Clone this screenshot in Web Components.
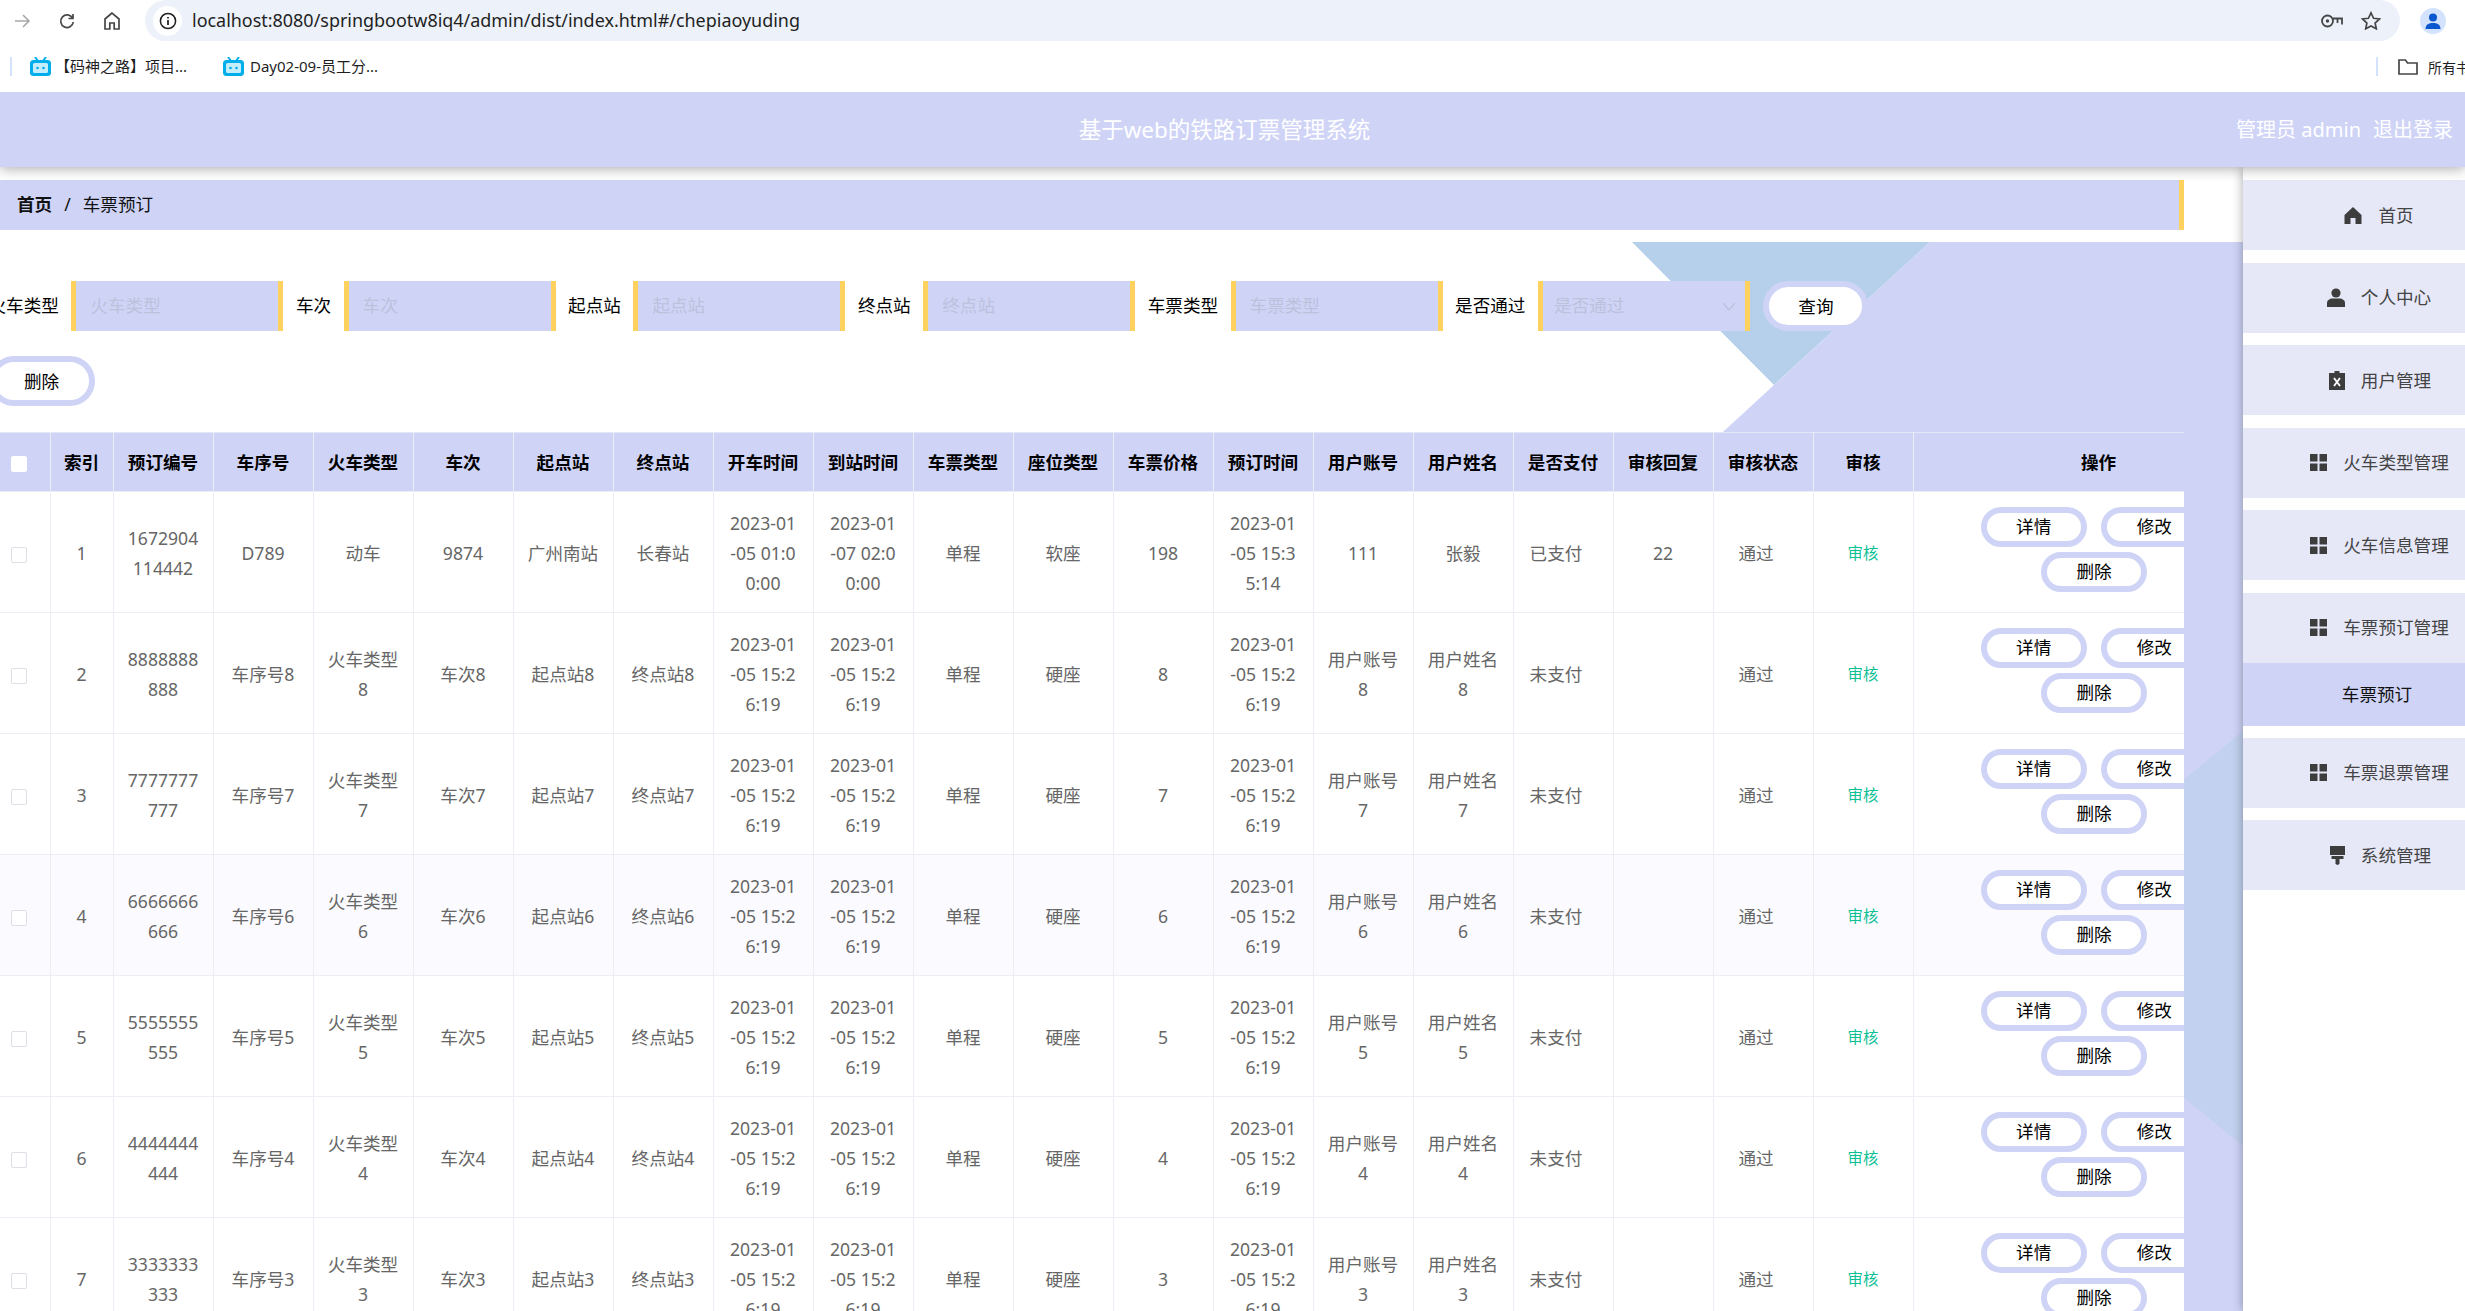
<!DOCTYPE html>
<html lang="zh">
<head>
<meta charset="utf-8">
<title>基于web的铁路订票管理系统</title>
<style>
html, body { margin: 0; height: 100%; overflow: hidden; background: #fff; }
body { font-family: "Noto Sans", "Noto Sans CJK SC", sans-serif; }
</style>
</head>
<body>
<app-shell>
    <browser-bar></browser-bar>
    <top-header title-text="基于web的铁路订票管理系统"></top-header>
    <div slot="main">
        <bread-crumb current="车票预订">首页</bread-crumb>
        <search-form></search-form>
        <ticket-table></ticket-table>
    </div>
    <side-menu slot="side">
        <side-item icon="home">首页</side-item>
        <side-item icon="user">个人中心</side-item>
        <side-item icon="clip">用户管理</side-item>
        <side-item icon="grid">火车类型管理</side-item>
        <side-item icon="grid">火车信息管理</side-item>
        <side-item icon="grid" flush>车票预订管理</side-item>
        <side-sub>车票预订</side-sub>
        <side-item icon="grid">车票退票管理</side-item>
        <side-item icon="brush">系统管理</side-item>
    </side-menu>
</app-shell>

<script>
const ICONS = {
    home: `<svg width="18" height="17" viewBox="0 0 18 17"><path fill="#3d3d3d" d="M9 0 17.5 8V17H11.5V11H6.5V17H.5V8Z"/></svg>`,
    user: `<svg width="18" height="19" viewBox="0 0 18 19"><circle cx="9" cy="5" r="4.6" fill="#3d3d3d"/><path fill="#3d3d3d" d="M0 19V15C0 12 3 10.5 5.5 10.5H12.5C15 10.5 18 12 18 15V19Z"/></svg>`,
    clip: `<svg width="16" height="19" viewBox="0 0 16 19"><path fill="#3d3d3d" d="M5.5 0H10.5V2H16V19H0V2H5.5Z"/><path stroke="#fff" stroke-width="1.8" d="M5 7 11 15M11 7 5 15"/></svg>`,
    grid: `<svg width="17" height="17" viewBox="0 0 17 17"><path fill="#3d3d3d" d="M0 0H7.5V7.5H0ZM9.5 0H17V7.5H9.5ZM0 9.5H7.5V17H0ZM9.5 9.5H17V17H9.5Z"/></svg>`,
    brush: `<svg width="15" height="19" viewBox="0 0 15 19"><path fill="#3d3d3d" d="M0 0H15V9H0ZM1.5 10H13.5V13H9.5V18L7.5 19 5.5 18V13H1.5Z"/></svg>`
};

class AppShell extends HTMLElement {
    constructor() {
        super();
        this.shadowDOM = this.attachShadow({mode: "open"});
    }

    connectedCallback() {
        this.shadowDOM.innerHTML = `
        <style>
        :host { display: flex; flex-direction: column; height: 1311px; width: 2465px; overflow: hidden; }
        .body { flex: 1; display: flex; min-height: 0; }
        .main { position: relative; width: 2243px; flex: none; overflow: hidden; padding-top: 13px; box-sizing: border-box; }
        .deco { position: absolute; left: 0; top: 75px; display: block; }
        .content { position: relative; }
        </style>
        <slot></slot>
        <div class="body">
            <div class="main">
                <svg class="deco" width="2243" height="1069" viewBox="0 0 2243 1069">
                    <polygon fill="#cfd4f7" points="1930,0 2243,0 2243,1069 800,1069 1724,189"/>
                    <polygon fill="#b6cfea" points="1632,0 1930,0 1774,143"/>
                    <polygon fill="#c2d1f0" points="2243,489 1990,697 2243,904"/>
                </svg>
                <div class="content"><slot name="main"></slot></div>
            </div>
            <slot name="side"></slot>
        </div>
        `;
    }
}

class BrowserBar extends HTMLElement {
    constructor() {
        super();
        this.shadowDOM = this.attachShadow({mode: "open"});
    }

    tv() {
        return `<svg width="21" height="19" viewBox="0 0 21 19" style="flex:none"><path fill="none" stroke="#00aeec" stroke-width="2" d="M5 0 8 4M16 0 13 4"/><rect x="0" y="3" width="21" height="16" rx="3.5" fill="#00aeec"/><rect x="3" y="6" width="15" height="10" rx="1.5" fill="#c5eefc"/><circle cx="7.5" cy="11" r="1.3" fill="#00aeec"/><circle cx="13.5" cy="11" r="1.3" fill="#00aeec"/></svg>`;
    }

    connectedCallback() {
        this.shadowDOM.innerHTML = `
        <style>
        :host { display: block; height: 92px; background: #fff; position: relative; z-index: 4; font-family: "Noto Sans", "Noto Sans CJK SC", sans-serif; color: #1f1f1f; }
        .top { height: 41px; display: flex; align-items: center; }
        .nav { display: flex; align-items: center; width: 145px; flex: none; }
        .nav svg { display: block; }
        .addr { width: 2255px; flex: none; height: 41px; background: #ecf1fa; border-radius: 0 22px 22px 0 / 0 22px 22px 0; border-top-left-radius: 22px; border-bottom-left-radius: 22px; display: flex; align-items: center; box-sizing: border-box; padding-left: 8px; }
        .info { width: 29px; height: 30px; border-radius: 50%; background: #fff; display: flex; align-items: center; justify-content: center; flex: none; margin-right: 10px; }
        .url { font-size: 17.95px; flex: 1; white-space: nowrap; padding-bottom: 2px; }
        .tools { display: flex; align-items: center; gap: 18px; padding-right: 19px; }
        .avatar { margin-left: 20px; flex: none; }
        .marks { height: 51px; display: flex; align-items: center; font-size: 15px; position: relative; }
        .sep { width: 2px; height: 19px; background: #d3e3fd; flex: none; }
        .mark { display: flex; align-items: center; white-space: nowrap; flex: none; }
        .mark span { padding-bottom: 2px; }
        .marks .right { margin-left: auto; display: flex; align-items: center; overflow: hidden; width: 89px; flex: none; white-space: nowrap; }
        </style>
        <div class="top">
            <div class="nav">
                <svg style="margin-left:13px" width="18" height="18" viewBox="0 0 18 18"><path fill="none" stroke="#a8a8a8" stroke-width="1.6" d="M2 9H16M10 3l6 6-6 6"/></svg>
                <svg style="margin-left:27px" width="18" height="18" viewBox="0 0 18 18"><path fill="none" stroke="#474747" stroke-width="1.7" d="M14.6 6.2A6.3 6.3 0 1 0 15.3 10M15 2V6.5H10.5"/></svg>
                <svg style="margin-left:27px" width="18" height="20" viewBox="0 0 18 20"><path fill="none" stroke="#474747" stroke-width="1.7" d="M9 2 2 8V18H6.8V12H11.2V18H16V8Z"/></svg>
            </div>
            <div class="addr">
                <div class="info"><svg width="18" height="18" viewBox="0 0 18 18"><circle cx="9" cy="9" r="7.6" fill="none" stroke="#1f1f1f" stroke-width="1.5"/><path stroke="#1f1f1f" stroke-width="1.7" d="M9 8V13M9 5V6.6"/></svg></div>
                <div class="url">localhost:8080/springbootw8iq4/admin/dist/index.html#/chepiaoyuding</div>
                <div class="tools">
                    <svg width="22" height="14" viewBox="0 0 22 14"><circle cx="6.5" cy="7" r="5.5" fill="none" stroke="#474747" stroke-width="1.8"/><circle cx="6.5" cy="7" r="1.7" fill="#474747"/><path fill="none" stroke="#474747" stroke-width="1.8" d="M12 4.5H21V10.5M16.5 4.5V9"/></svg>
                    <svg width="20" height="19" viewBox="0 0 20 19"><path fill="none" stroke="#474747" stroke-width="1.7" d="M10 1.8 12.6 7.3 18.5 8 14.1 12 15.3 17.8 10 14.9 4.7 17.8 5.9 12 1.5 8 7.4 7.3Z"/></svg>
                </div>
            </div>
            <svg class="avatar" width="26" height="26" viewBox="0 0 26 26"><circle cx="13" cy="13" r="13" fill="#d3e3fd"/><circle cx="13" cy="9.5" r="4" fill="#0b57d0"/><path fill="#0b57d0" d="M5.5 21C5.5 16.5 9 15 13 15S20.5 16.5 20.5 21Z"/></svg>
        </div>
        <div class="marks">
            <div class="sep" style="margin-left:10px"></div>
            <div class="mark" style="margin-left:18px;width:193px">${this.tv()}<span style="margin-left:4px">【码神之路】项目...</span></div>
            <div class="mark">${this.tv()}<span style="margin-left:6px">Day02-09-员工分...</span></div>
            <div class="right">
                <div class="sep"></div>
                <svg style="margin-left:20px;flex:none" width="20" height="16" viewBox="0 0 20 16"><path fill="none" stroke="#474747" stroke-width="1.7" d="M1 2V15H19V4H9.5L7.5 1H1Z"/></svg>
                <span style="margin-left:10px;font-size:14px">所有书签</span>
            </div>
        </div>
        `;
    }
}

class TopHeader extends HTMLElement {
    constructor() {
        super();
        this.shadowDOM = this.attachShadow({mode: "open"});
    }

    connectedCallback() {
        this.shadowDOM.innerHTML = `
        <style>
        :host { display: grid; grid-template-columns: 1fr auto 1fr; align-items: center; height: 75px; box-sizing: border-box; padding-bottom: 3px; background: #cfd4f7; color: #fff; padding-right: 12px; box-shadow: 0 2px 12px rgba(0,0,0,.32); position: relative; z-index: 3; font-family: "Noto Sans", "Noto Sans CJK SC", sans-serif; }
        .title { grid-column: 2; font-size: 22.5px; padding-right: 4px; white-space: nowrap; }
        .right { grid-column: 3; justify-self: end; font-size: 20px; display: flex; gap: 12px; white-space: nowrap; }
        </style>
        <div class="title">${this.getAttribute("title-text")}</div>
        <div class="right"><span>管理员 admin</span><span>退出登录</span></div>
        `;
    }
}

class BreadCrumb extends HTMLElement {
    constructor() {
        super();
        this.shadowDOM = this.attachShadow({mode: "open"});
    }

    connectedCallback() {
        this.shadowDOM.innerHTML = `
        <style>
        :host { display: flex; align-items: center; width: 2184px; height: 50px; box-sizing: border-box; padding-bottom: 3px; background: #cfd4f7; border-right: 5px solid #ffd15f; padding-left: 17px; font-size: 17.6px; color: #111; font-family: "Noto Sans", "Noto Sans CJK SC", sans-serif; }
        b { font-weight: 700; }
        .s { margin: 0 12px; }
        </style>
        <b><slot></slot></b><span class="s">/</span><span>${this.getAttribute("current")}</span>
        `;
    }
}

class PillButton extends HTMLElement {
    constructor() {
        super();
        this.shadowDOM = this.attachShadow({mode: "open"});
    }

    connectedCallback() {
        this.shadowDOM.innerHTML = `
        <style>
        :host { display: inline-flex; align-items: center; justify-content: center; box-sizing: border-box; width: 106px; height: 40px; padding-bottom: 2px; background: #fff; border: 6px solid #cfd4f7; border-radius: 20px; color: #000; font-size: 17.6px; flex: none; cursor: pointer; }
        :host([big]) { height: 50px; border-radius: 25px; }
        </style>
        <slot></slot>
        `;
    }
}

class SearchField extends HTMLElement {
    constructor() {
        super();
        this.shadowDOM = this.attachShadow({mode: "open"});
    }

    connectedCallback() {
        const label = this.getAttribute("label");
        const select = this.hasAttribute("select");
        this.shadowDOM.innerHTML = `
        <style>
        :host { display: flex; align-items: center; gap: 12.5px; flex: none; color: #000; font-size: 17.6px; }
        .lb { padding-bottom: 3px; }
        .box { width: 212px; height: 50px; box-sizing: border-box; background: #cfd4f7; border-left: 5px solid #ffd15f; border-right: 5px solid #ffd15f; padding-left: ${select ? 11 : 14}px; padding-right: 9px; display: flex; align-items: center; justify-content: space-between; color: #bcc1dc; }
        </style>
        <span class="lb">${label}</span>
        <div class="box"><span class="lb">${label}</span>${select ? `<svg width="14" height="9" viewBox="0 0 14 9"><path fill="none" stroke="#bcc1dc" stroke-width="1.3" d="M1 1 7 8 13 1"/></svg>` : ""}</div>
        `;
    }
}

class SearchForm extends HTMLElement {
    constructor() {
        super();
        this.shadowDOM = this.attachShadow({mode: "open"});
    }

    connectedCallback() {
        this.shadowDOM.innerHTML = `
        <style>
        :host { display: block; margin-top: 51px; margin-left: -11.5px; font-family: "Noto Sans", "Noto Sans CJK SC", sans-serif; }
        .row { display: flex; align-items: center; gap: 12.5px; }
        .row pill-button { margin-left: 1px; }
        .del { margin-top: 25px; height: 50px; }
        </style>
        <div class="row">
            <search-field label="火车类型"></search-field>
            <search-field label="车次"></search-field>
            <search-field label="起点站"></search-field>
            <search-field label="终点站"></search-field>
            <search-field label="车票类型"></search-field>
            <search-field label="是否通过" select></search-field>
            <pill-button big style="width:105px">查询</pill-button>
        </div>
        <div class="del"><pill-button big>删除</pill-button></div>
        `;
    }
}

class TicketTable extends HTMLElement {
    constructor() {
        super();
        this.shadowDOM = this.attachShadow({mode: "open"});
    }

    rows() {
        const list = [{
            no: "1672904114442", seq: "D789", type: "动车", num: "9874", from: "广州南站", to: "长春站",
            go: "2023-01-05 01:00:00", arr: "2023-01-07 02:00:00", seat: "软座", price: "198",
            time: "2023-01-05 15:35:14", acc: "111", name: "张毅", pay: "已支付", reply: "22"
        }];
        for (let n = 8; n >= 3; n--) {
            list.push({
                no: String(n).repeat(10), seq: "车序号" + n, type: "火车类型" + n, num: "车次" + n,
                from: "起点站" + n, to: "终点站" + n, go: "2023-01-05 15:26:19", arr: "2023-01-05 15:26:19",
                seat: "硬座", price: String(n), time: "2023-01-05 15:26:19", acc: "用户账号" + n,
                name: "用户姓名" + n, pay: "未支付", reply: ""
            });
        }
        return list;
    }

    connectedCallback() {
        const heads = ["索引", "预订编号", "车序号", "火车类型", "车次", "起点站", "终点站", "开车时间", "到站时间", "车票类型", "座位类型", "车票价格", "预订时间", "用户账号", "用户姓名", "是否支付", "审核回复", "审核状态", "审核", "操作"];
        const body = this.rows().map((r, i) => `
            <tr class="${i === 3 ? "tint" : ""}">
                <td><span class="check"></span></td>
                <td>${i + 1}</td><td>${r.no}</td><td>${r.seq}</td><td>${r.type}</td><td>${r.num}</td><td>${r.from}</td><td>${r.to}</td>
                <td>${r.go}</td><td>${r.arr}</td><td>单程</td><td>${r.seat}</td><td>${r.price}</td><td>${r.time}</td>
                <td>${r.acc}</td><td>${r.name}</td><td><span class="shift">${r.pay}</span></td><td>${r.reply}</td><td><span class="shift">通过</span></td>
                <td class="link">审核</td>
                <td class="ops"><div><pill-button>详情</pill-button><pill-button>修改</pill-button><pill-button>删除</pill-button></div></td>
            </tr>`).join("");
        this.shadowDOM.innerHTML = `
        <style>
        :host { display: block; width: 2184px; margin-top: 26px; overflow: hidden; font-family: "Noto Sans", "Noto Sans CJK SC", sans-serif; font-size: 17.6px; }
        table { border-collapse: separate; border-spacing: 0; table-layout: fixed; width: 2287px; margin-left: -11.5px; }
        th, td { box-sizing: border-box; text-align: center; border-right: 1px solid #ebeef5; border-bottom: 1px solid #ebeef5; padding: 0 14px; line-height: 30px; word-break: break-all; }
        th { height: 60px; background: #cfd4f7; color: #000; font-weight: 700; white-space: nowrap; padding: 0; border-top: 1px solid #e4e7f5; }
        th:last-child { padding-left: 9px; }
        td { height: 121px; background: #fff; color: #666; padding-top: 2px; }
        tr.tint td { background: #fbfbff; }
        .check { display: inline-block; width: 16px; height: 16px; box-sizing: border-box; border: 1px solid #dcdfe6; border-radius: 2px; background: #fff; vertical-align: middle; }
        th .check { border-color: #fff; }
        .shift { padding-right: 14px; }
        td.link { color: #0cbf95; font-size: 15.4px; padding-top: 4px; }
        td.ops { padding: 0 50px 5px; }
        .ops div { display: flex; flex-wrap: wrap; justify-content: center; gap: 5px 14.6px; }
        </style>
        <table>
            <colgroup><col style="width:62px"><col style="width:63px">${'<col style="width:100px">'.repeat(18)}<col style="width:362px"></colgroup>
            <thead><tr><th><span class="check"></span></th>${heads.map(h => `<th>${h}</th>`).join("")}</tr></thead>
            <tbody>${body}</tbody>
        </table>
        `;
    }
}

class SideMenu extends HTMLElement {
    constructor() {
        super();
        this.shadowDOM = this.attachShadow({mode: "open"});
    }

    connectedCallback() {
        this.shadowDOM.innerHTML = `
        <style>
        :host { display: block; width: 222px; flex: none; box-sizing: border-box; padding-top: 13px; background: #fff; box-shadow: 0 0 10px rgba(0,0,0,.35); position: relative; z-index: 2; font-family: "Noto Sans", "Noto Sans CJK SC", sans-serif; }
        </style>
        <slot></slot>
        `;
    }
}

class SideItem extends HTMLElement {
    constructor() {
        super();
        this.shadowDOM = this.attachShadow({mode: "open"});
    }

    connectedCallback() {
        this.shadowDOM.innerHTML = `
        <style>
        :host { display: grid; grid-template-columns: minmax(0, 1fr) auto minmax(0, 1fr); align-items: center; height: 70px; margin-bottom: 12.5px; box-sizing: border-box; padding-left: 84px; background: #e6e8f8; color: #444; font-size: 17.6px; }
        :host([flush]) { margin-bottom: 0; }
        .i { justify-self: end; margin-right: 16px; display: flex; }
        .t { white-space: nowrap; padding-bottom: 2px; }
        </style>
        <span class="i">${ICONS[this.getAttribute("icon")]}</span><span class="t"><slot></slot></span>
        `;
    }
}

class SideSub extends HTMLElement {
    constructor() {
        super();
        this.shadowDOM = this.attachShadow({mode: "open"});
    }

    connectedCallback() {
        this.shadowDOM.innerHTML = `
        <style>
        :host { display: flex; align-items: center; justify-content: center; height: 63px; margin-bottom: 12px; padding-left: 46px; padding-bottom: 2px; box-sizing: border-box; background: #cfd4f7; color: #111; font-size: 17.6px; }
        </style>
        <slot></slot>
        `;
    }
}

customElements.define("pill-button", PillButton);
customElements.define("search-field", SearchField);
customElements.define("search-form", SearchForm);
customElements.define("ticket-table", TicketTable);
customElements.define("bread-crumb", BreadCrumb);
customElements.define("browser-bar", BrowserBar);
customElements.define("top-header", TopHeader);
customElements.define("side-item", SideItem);
customElements.define("side-sub", SideSub);
customElements.define("side-menu", SideMenu);
customElements.define("app-shell", AppShell);
</script>
</body>
</html>
